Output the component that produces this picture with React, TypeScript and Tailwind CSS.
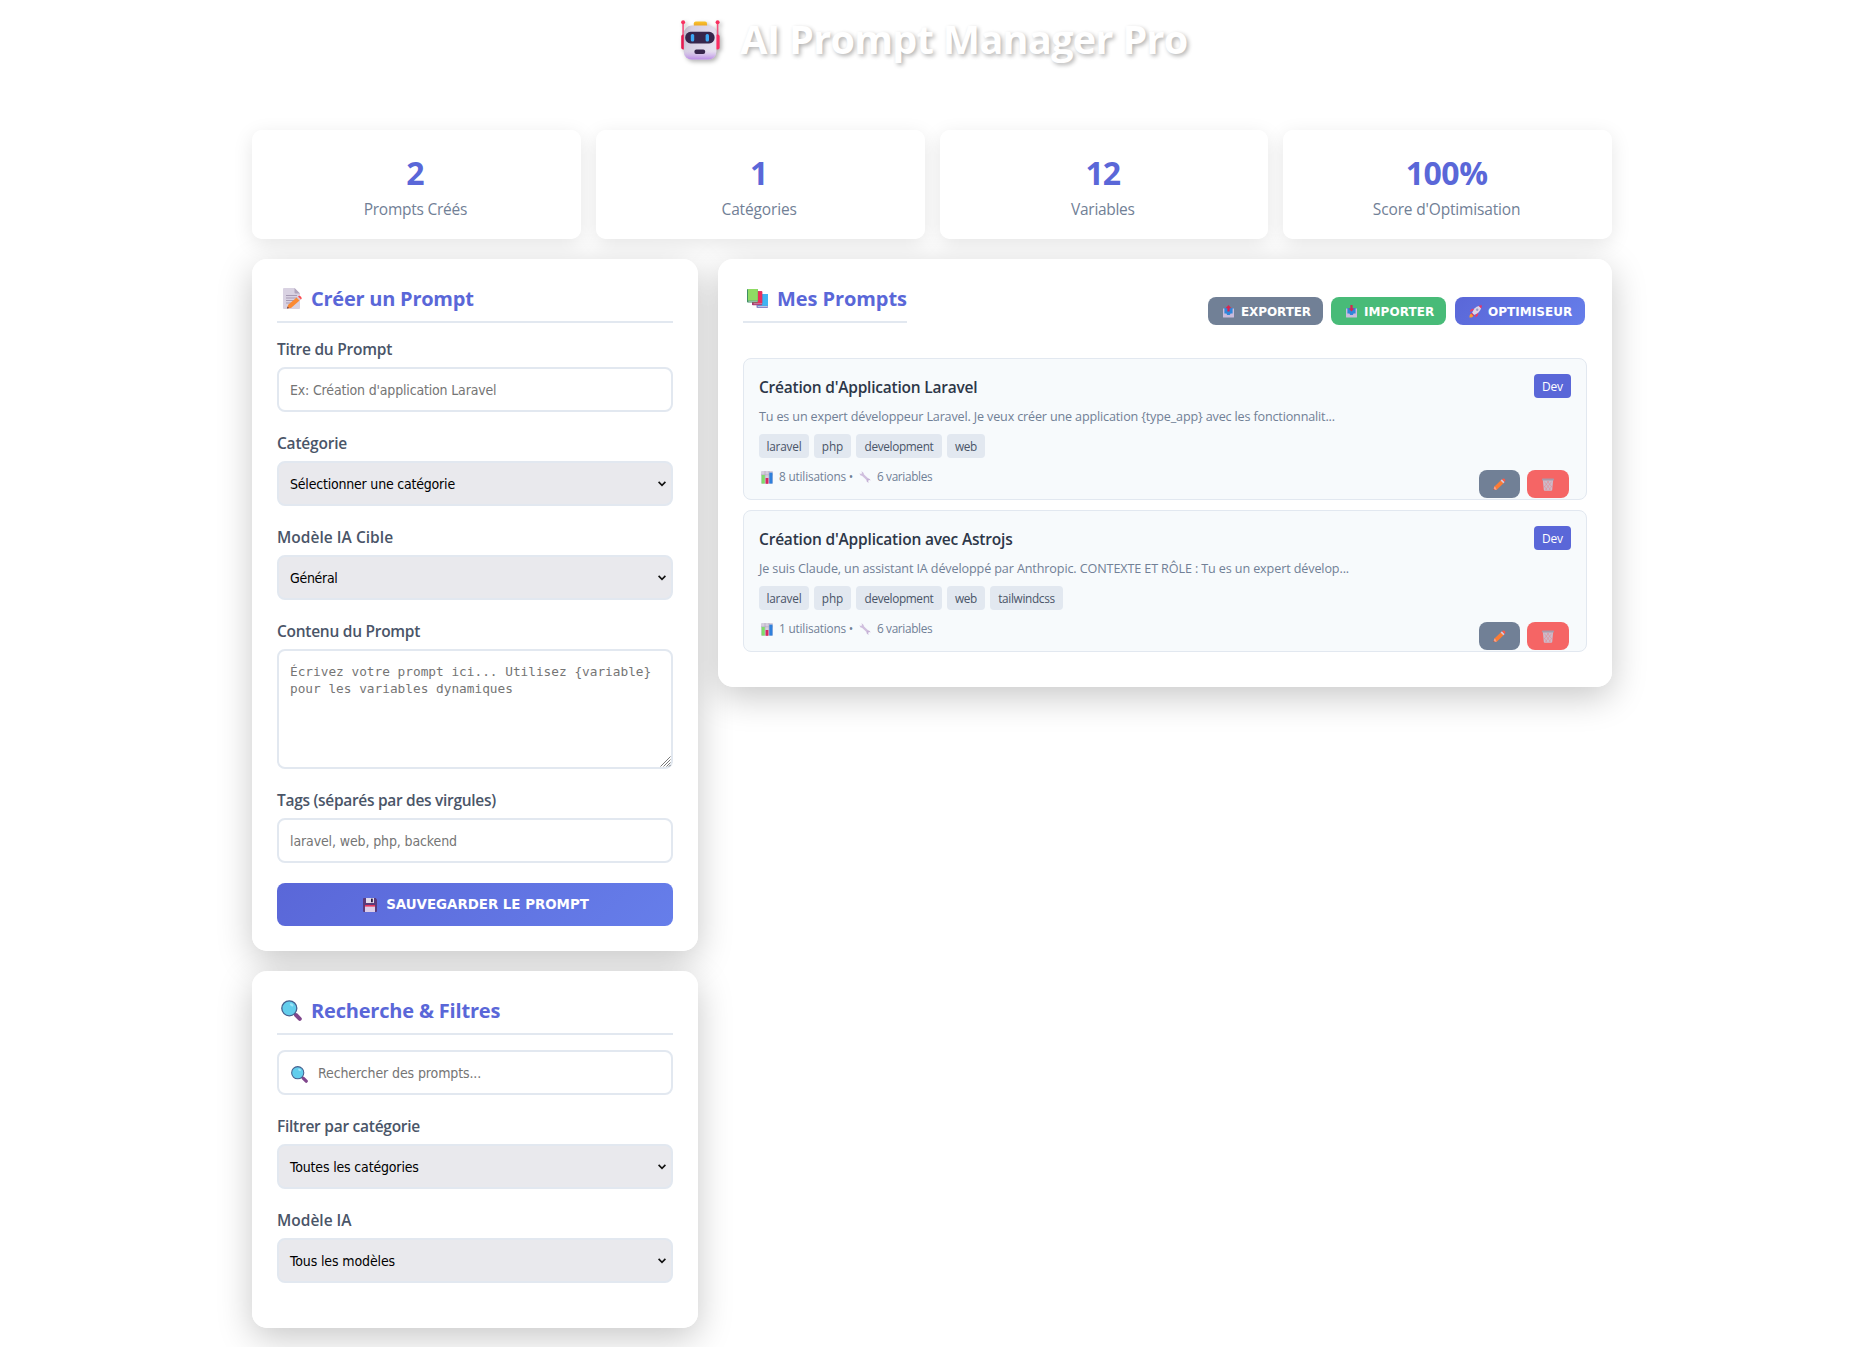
import React from "react";

type IconProps = { className?: string };

function RobotIcon({ className = "" }: IconProps) {
  return (
    <svg viewBox="0 0 40 40" className={className}>
      <defs>
        <linearGradient id="rb-face" x1="0" y1="0" x2="1" y2="0.3">
          <stop offset="0" stopColor="#b9b2c0" />
          <stop offset="0.25" stopColor="#d6cfe2" />
          <stop offset="1" stopColor="#e6dff0" />
        </linearGradient>
        <linearGradient id="rb-shade" x1="0" y1="0" x2="0" y2="1">
          <stop offset="0.75" stopColor="#c9a4ea" stopOpacity="0" />
          <stop offset="1" stopColor="#b98ae6" />
        </linearGradient>
        <linearGradient id="rb-top" x1="0" y1="0" x2="0" y2="1">
          <stop offset="0" stopColor="#fbc52a" />
          <stop offset="1" stopColor="#e69a25" />
        </linearGradient>
      </defs>
      <rect x="1.3" y="3" width="1.6" height="15" fill="#f2507f" />
      <rect x="35.8" y="3" width="1.6" height="15" fill="#f2507f" />
      <circle cx="2.1" cy="2.2" r="2" fill="#f8315f" />
      <circle cx="36.6" cy="2.2" r="2" fill="#f8315f" />
      <rect x="0.2" y="14.6" width="5" height="15" rx="2" fill="#e6194f" />
      <rect x="34" y="14.6" width="4.6" height="15" rx="2" fill="#fb2c62" />
      <rect x="12.8" y="1.4" width="13.2" height="6" rx="2" fill="url(#rb-top)" />
      <rect x="2.8" y="5.6" width="32.6" height="34" rx="8" fill="url(#rb-face)" />
      <rect x="2.8" y="5.6" width="32.6" height="34" rx="8" fill="url(#rb-shade)" />
      <rect x="4.2" y="11.8" width="29.4" height="11.6" rx="5.4" fill="#37264c" />
      <rect x="9.8" y="14" width="3.4" height="7.6" rx="1.5" fill="#3da8f5" />
      <rect x="24.6" y="14" width="3.4" height="7.6" rx="1.5" fill="#3da8f5" />
      <rect x="13.4" y="29.6" width="10.8" height="4.4" rx="2" fill="#37264c" />
    </svg>
  );
}

function MemoIcon({ className = "" }: IconProps) {
  return (
    <svg viewBox="0 0 20 21" className={className}>
      <path d="M0 1 Q0 0 1 0 H11.5 L17 5.5 V20 Q17 21 16 21 H1 Q0 21 0 20 Z" fill="#d9d2e2" />
      <path d="M11.5 0 L17 5.5 H12.5 Q11.5 5.5 11.5 4.5 Z" fill="#b0a5bd" />
      <path d="M3 7.5 H14 M3 10 H14 M3 12.5 H11 M3 15 H8" stroke="#a79bb5" strokeWidth="1" />
      <path d="M4 20.4 L5.2 16.8 L13.6 9.6 L16.6 12.6 L8 20 Z" fill="#fb8a34" />
      <path d="M13.6 9.6 L15 8.4 L18 11.4 L16.6 12.6 Z" fill="#d9c7d4" />
      <path d="M15 8.4 Q16.5 7.2 18 8.7 Q19.6 10.3 18 11.4 Z" fill="#fb4a4f" />
      <path d="M4 20.4 L4.6 18.6 L6 20 Z" fill="#5a3a4a" />
    </svg>
  );
}

function BooksIcon({ className = "" }: IconProps) {
  return (
    <svg viewBox="0 0 21 19" className={className}>
      <rect x="9.5" y="5" width="11.5" height="14" rx="0.8" fill="#8c86c8" />
      <rect x="10.4" y="5" width="10.6" height="11.8" fill="#3fb4f2" />
      <rect x="5" y="2.3" width="10.2" height="14" rx="0.8" fill="#a7356d" />
      <rect x="6" y="2.3" width="9.2" height="11.8" fill="#ea2f5b" />
      <rect x="0" y="0" width="10.8" height="13.6" rx="0.8" fill="#3f8f63" />
      <rect x="1" y="0" width="9.8" height="11.6" fill="#8fdb63" />
      <rect x="1.4" y="11.8" width="9.2" height="0.9" fill="#b5cfc6" />
      <rect x="6.6" y="14.3" width="8.4" height="0.9" fill="#d58fb0" />
      <rect x="11" y="17" width="9.6" height="0.9" fill="#c3cbe8" />
    </svg>
  );
}

function LensIcon({ className = "" }: IconProps) {
  return (
    <svg viewBox="0 0 21 21" className={className}>
      <path d="M13 13 L15.4 15.4" stroke="#8a8a9c" strokeWidth="2" />
      <path d="M15 15 L18.8 18.8" stroke="#80468c" strokeWidth="4" strokeLinecap="round" />
      <circle cx="8.3" cy="8.3" r="7.5" fill="#62cdec" stroke="#44608f" strokeWidth="1.3" />
      <ellipse cx="10.6" cy="4.8" rx="2" ry="1.3" transform="rotate(35 10.6 4.8)" fill="#9be4f7" />
    </svg>
  );
}

function FloppyIcon({ className = "" }: IconProps) {
  return (
    <svg viewBox="0 0 14 14" className={className}>
      <path d="M0 1 Q0 0 1 0 H12.6 L14 1.4 V13 Q14 14 13 14 H1 Q0 14 0 13 Z" fill="#5b3a7a" />
      <rect x="3" y="0" width="8" height="5" fill="#e2dcec" />
      <rect x="8" y="0.6" width="1.8" height="3.6" fill="#2d1c42" />
      <rect x="2" y="7" width="10" height="7" fill="#dccde8" />
      <rect x="2" y="7" width="10" height="1.6" fill="#e8365c" />
    </svg>
  );
}

function TrayIcon({ up, className = "" }: IconProps & { up: boolean }) {
  return (
    <svg viewBox="0 0 11 13" className={className}>
      <rect x="0.6" y="3" width="9.8" height="7" fill="#2f86da" />
      <path d="M0 3.4 H1.4 V8.6 H3.4 L4.2 10 H6.8 L7.6 8.6 H9.6 V3.4 H11 V12 Q11 12.6 10.4 12.6 H0.6 Q0 12.6 0 12 Z" fill="#c9bbdc" />
      {up ? (
        <path d="M5.5 0 L8.4 3.2 H6.6 V6.6 H4.4 V3.2 H2.6 Z" fill="#d92450" />
      ) : (
        <path d="M5.5 6.6 L8.4 3.6 H6.6 V0 H4.4 V3.6 H2.6 Z" fill="#d92450" />
      )}
    </svg>
  );
}

function RocketIcon({ className = "" }: IconProps) {
  return (
    <svg viewBox="0 0 13 13" className={className}>
      <path d="M3.6 6 L1 6.8 Q0.4 7 1.6 5 Q2.6 3.4 5.2 3.8 Z" fill="#ef3a63" />
      <path d="M7 9.4 L6.2 12 Q6 12.6 8 11.4 Q9.6 10.4 9.2 7.8 Z" fill="#ef3a63" />
      <path d="M0.4 12.6 Q0.4 9 2.6 8.6 L4.4 10.4 Q4 12.6 0.4 12.6 Z" fill="#fb9a33" />
      <path d="M3 8 Q5 2 10 0.9 L12.1 3 Q11 8 5 10 Z" fill="#ddd3e6" />
      <path d="M9.6 0.8 Q11.6 0 12.8 0.2 Q13 1.4 12.2 3.4 Z" fill="#f0325f" />
      <circle cx="8.2" cy="4.8" r="1.2" fill="#8f9fca" />
      <path d="M2.6 7.6 L5.4 10.4 L4.4 10.9 L2.1 8.6 Z" fill="#e5315d" />
    </svg>
  );
}

function ChartIcon({ className = "" }: IconProps) {
  return (
    <svg viewBox="0 0 12 13" className={className}>
      <rect width="12" height="12.8" rx="1" fill="#d5cedd" />
      <path d="M0 3.8 H12 M4 0 V12 M8 0 V12" stroke="#aea3ba" strokeWidth="0.6" />
      <rect x="0.6" y="4" width="3.2" height="8.6" fill="#7fdc6a" />
      <rect x="4.6" y="7" width="2.8" height="5.8" fill="#d8265f" />
      <rect x="8.3" y="1.6" width="3.2" height="11" fill="#2f80dc" />
    </svg>
  );
}

function WrenchIcon({ className = "" }: IconProps) {
  return (
    <svg viewBox="0 0 12 12" className={className}>
      <path d="M3 3.2 L9 8.8" stroke="#d0bfde" strokeWidth="2.3" />
      <path d="M0.5 2.2 Q0.7 4.8 3.2 4.7 Q5.2 4.2 4.7 2.2 Q4 0.4 2.2 0.5 L3.2 2 L2 3.1 Z" fill="#d0bfde" />
      <path d="M11.6 9.6 Q11.2 7.3 9 7.4 Q7 8 7.6 10.2 Q8.3 11.5 9.9 11.4 L9 9.9 L10.1 8.9 Z" fill="#c6b2d6" />
    </svg>
  );
}

function PencilIcon({ className = "" }: IconProps) {
  return (
    <svg viewBox="0 0 13 13" className={className}>
      <path d="M0.4 12 L1.4 8.6 L8 2.2 L10.8 5 L4 11.4 Z" fill="#fb7c36" />
      <path d="M7.6 2.6 L9 1.3 L11.6 3.9 L10.3 5.3 Z" fill="#dcc8da" />
      <path d="M9 1.3 Q10.3 0 11.9 1 Q13 2.6 11.6 3.9 Z" fill="#fb5a48" />
      <path d="M0.4 12 L1.4 8.6 L2.6 9.3 L3 10.6 L4 11.4 Z" fill="#f6a08a" />
      <path d="M0.4 12 L0.8 10.8 L1.7 11.6 Z" fill="#553444" />
    </svg>
  );
}

function TrashIcon({ className = "" }: IconProps) {
  return (
    <svg viewBox="0 0 12 13" className={className}>
      <path d="M0.8 1.6 H11.2 L10.2 12 Q10 12.8 9.4 12.8 H2.6 Q2 12.8 1.8 12 Z" fill="#cbbccb" />
      <path d="M2.4 3.6 L8.6 12 M5.2 3 L9.8 9 M2.4 8.4 L5 12 M9.6 3.6 L3.4 12 M6.8 3 L2.2 9 M9.6 8.4 L7 12" stroke="#e48b94" strokeWidth="0.6" />
      <rect x="0" y="0.6" width="12" height="2" rx="0.8" fill="#a99aaa" />
    </svg>
  );
}

const TAHOMA = "font-['DejaVu_Sans_Condensed','DejaVu_Sans',sans-serif]";
const VERDANA = "font-['DejaVu_Sans',sans-serif]";
const SHADOW_LAYER = "relative before:absolute before:inset-0 before:-z-10 before:content-['']";
const PANEL = `${SHADOW_LAYER} rounded-[15px] bg-white/95 p-[25px] before:rounded-[15px] before:shadow-[0_10px_35px_rgba(0,0,0,0.22)]`;
const FIELD = `flex w-full items-center rounded-[8px] border-2 border-[#e2e8f0] px-[11px] text-[14px] ${TAHOMA}`;

function Stat({ value, label, valueTrack, labelTrack }: { value: string; label: string; valueTrack: string; labelTrack: string }) {
  return (
    <div className={`${SHADOW_LAYER} flex h-[109px] flex-1 flex-col items-center rounded-[10px] bg-white/95 pt-[21px] pr-[2px] before:rounded-[10px] before:shadow-[0_5px_20px_rgba(0,0,0,0.1)]`}>
      <div className={`text-[32px] leading-[43px] font-bold text-[#5a67d8] ${valueTrack}`}>{value}</div>
      <div className={`mt-[4px] text-[15.5px] leading-[22px] text-[#718096] ${labelTrack}`}>{label}</div>
    </div>
  );
}

function Heading({ icon, text, track }: { icon: React.ReactNode; text: string; track: string }) {
  return (
    <h2 className="mb-[15px] flex h-[39px] items-start border-b-2 border-[#e2e8f0] text-[20px] leading-[29px] font-bold text-[#5a67d8]">
      <span className="flex h-[29px] w-[34px] shrink-0 items-center pl-[4px]">{icon}</span>
      <span className={`whitespace-nowrap ${track}`}>{text}</span>
    </h2>
  );
}

function Label({ text, track }: { text: string; track: string }) {
  return <div className={`mb-[5px] h-[24px] text-[15.5px] leading-[22px] font-semibold text-[#4a5568] ${track}`}>{text}</div>;
}

function SelectBox({ text, track }: { text: string; track: string }) {
  return (
    <div className={`${FIELD} mb-[20px] h-[45px] justify-between bg-[#e9e9ed] pr-[5px] text-black`}>
      <span className={`pt-[2px] ${track}`}>{text}</span>
      <svg viewBox="0 0 8 6" className="h-[6px] w-[8px]">
        <path d="M0.6 0.9 L4 4.4 L7.4 0.9" fill="none" stroke="#111" strokeWidth="1.6" />
      </svg>
    </div>
  );
}

function TextBox({ text, track, icon }: { text: string; track: string; icon?: React.ReactNode }) {
  return (
    <div className={`${FIELD} mb-[20px] h-[45px] bg-white text-[#757575]`}>
      {icon}
      <span className={`pt-[2px] ${track}`}>{text}</span>
    </div>
  );
}

const TOOL = `flex h-[28px] items-center rounded-[8px] text-[12px] font-bold text-white ${VERDANA}`;

type Tag = { name: string; box: string };
const baseTags: Tag[] = [
  { name: "laravel", box: "w-[50px] tracking-[-0.2px]" },
  { name: "php", box: "w-[37px] tracking-[-0.1px]" },
  { name: "development", box: "w-[86px] tracking-[-0.35px]" },
  { name: "web", box: "w-[38px] tracking-[-0.3px]" },
];

function PromptItem({ title, titleTrack, body, bodyTrack, tags, uses }: { title: string; titleTrack: string; body: string; bodyTrack: string; tags: Tag[]; uses: string }) {
  return (
    <div className="relative mb-[10px] h-[142px] rounded-[8px] border border-[#e2e8f0] bg-[#f7fafc] p-[15px]">
      <div className="flex h-[28px] items-start justify-between">
        <div className={`text-[15.5px] leading-[27px] font-semibold text-[#2d3748] ${titleTrack}`}>{title}</div>
        <span className="flex h-[24px] w-[37px] items-center justify-center rounded-[4px] bg-[#5a67d8] pt-[2px] text-[12px] tracking-[-0.2px] text-white">Dev</span>
      </div>
      <p className={`h-[32px] text-[12.6px] leading-[29px] whitespace-nowrap text-[#718096] ${bodyTrack}`}>{body}</p>
      <div className="flex gap-[5px]">
        {tags.map((t) => (
          <span key={t.name} className={`flex h-[24px] items-center justify-center rounded-[4px] bg-[#e2e8f0] pt-[2px] text-[11.8px] text-[#4a5568] ${t.box}`}>
            {t.name}
          </span>
        ))}
      </div>
      <div className="mt-[8px] flex h-[22px] items-center text-[11.8px] text-[#718096]">
        <ChartIcon className="mr-[6px] ml-[2px] h-[13px] w-[12px]" />
        <span className="w-[80px] tracking-[-0.18px] whitespace-nowrap">{uses} utilisations •</span>
        <WrenchIcon className="mr-[6px] h-[12px] w-[12px]" />
        <span className="tracking-[-0.35px] whitespace-nowrap">6 variables</span>
      </div>
      <div className="absolute right-[17px] bottom-[1px] flex gap-[7px]">
        <button className="flex h-[28px] w-[41px] items-center justify-center rounded-[8px] bg-[#718096]">
          <PencilIcon className="h-[13px] w-[13px]" />
        </button>
        <button className="flex h-[28px] w-[42px] items-center justify-center rounded-[8px] bg-[#f56565]">
          <TrashIcon className="h-[13px] w-[12px]" />
        </button>
      </div>
    </div>
  );
}

export default function App() {
  return (
    <div className="relative isolate h-[1347px] overflow-hidden bg-white pl-[252px] font-['Open_Sans','Noto_Sans',sans-serif]">
      <div className="w-[1360px]">
        <header className="flex h-[130px] justify-center pt-[12px] pl-[5px]">
          <RobotIcon className="mt-[8px] mr-[19px] h-[40px] w-[40px] drop-shadow-[2px_2px_2px_rgba(0,0,0,0.3)]" />
          <h1 className="text-[39.5px] leading-[54px] font-bold tracking-[-0.65px] text-white [text-shadow:2px_2px_4px_rgba(0,0,0,0.3)]">AI Prompt Manager Pro</h1>
        </header>

        <div className="mb-[20px] flex gap-[15px]">
          <Stat value="2" label="Prompts Créés" valueTrack="" labelTrack="tracking-[-0.25px]" />
          <Stat value="1" label="Catégories" valueTrack="" labelTrack="tracking-[-0.15px]" />
          <Stat value="12" label="Variables" valueTrack="tracking-[-0.8px]" labelTrack="tracking-[-0.3px]" />
          <Stat value="100%" label="Score d'Optimisation" valueTrack="tracking-[-0.5px]" labelTrack="tracking-[-0.16px]" />
        </div>

        <div className="flex items-start gap-[20px]">
          <div className="flex w-[446px] shrink-0 flex-col gap-[20px]">
            <section className={PANEL}>
              <Heading icon={<MemoIcon className="ml-[2px] h-[21px] w-[20px]" />} text="Créer un Prompt" track="tracking-[-0.24px]" />
              <Label text="Titre du Prompt" track="tracking-[-0.24px]" />
              <TextBox text="Ex: Création d'application Laravel" track="tracking-[-0.17px]" />
              <Label text="Catégorie" track="tracking-[-0.21px]" />
              <SelectBox text="Sélectionner une catégorie" track="tracking-[-0.2px]" />
              <Label text="Modèle IA Cible" track="tracking-[0.03px]" />
              <SelectBox text="Général" track="tracking-[-0.3px]" />
              <Label text="Contenu du Prompt" track="tracking-[-0.27px]" />
              <div className="relative mb-[20px] h-[120px] rounded-[8px] border-2 border-[#e2e8f0] bg-white px-[11px] py-[12px] font-['DejaVu_Sans_Mono',monospace] text-[12.77px] leading-[17px] text-[#757575]">
                Écrivez votre prompt ici... Utilisez {"{variable}"} pour les variables dynamiques
                <svg viewBox="0 0 11 11" className="absolute right-0 bottom-0 h-[11px] w-[11px]">
                  <path d="M0.5 10.5 L10.5 0.5 M3.5 10.5 L10.5 3.5 M6.5 10.5 L10.5 6.5 M9 10.5 L10.5 9" stroke="#6b6b6b" strokeWidth="0.9" />
                </svg>
              </div>
              <Label text="Tags (séparés par des virgules)" track="tracking-[-0.3px]" />
              <TextBox text="laravel, web, php, backend" track="tracking-[-0.12px]" />
              <button className={`flex h-[43px] w-full items-center justify-center rounded-[8px] bg-[linear-gradient(135deg,#5a67d8,#667eea)] pl-[2px] text-[13.4px] font-bold text-white ${VERDANA}`}>
                <FloppyIcon className="mt-[1px] mr-[9px] h-[14px] w-[14px]" />
                <span className="pt-[2px] tracking-[-0.02px]">SAUVEGARDER LE PROMPT</span>
              </button>
            </section>

            <section className={`${PANEL} h-[357px]`}>
              <Heading icon={<LensIcon className="h-[21px] w-[21px]" />} text="Recherche & Filtres" track="tracking-[-0.18px]" />
              <TextBox text="Rechercher des prompts..." track="tracking-[-0.11px]" icon={<LensIcon className="mt-[4px] mr-[10px] ml-[1px] h-[17px] w-[17px]" />} />
              <Label text="Filtrer par catégorie" track="tracking-[-0.26px]" />
              <SelectBox text="Toutes les catégories" track="tracking-[-0.16px]" />
              <Label text="Modèle IA" track="tracking-[0px]" />
              <SelectBox text="Tous les modèles" track="tracking-[-0.12px]" />
            </section>
          </div>

          <section className={`${PANEL} h-[428px] flex-1`}>
            <div className="flex h-[74px] items-start justify-between pr-[2px]">
              <Heading icon={<BooksIcon className="h-[19px] w-[21px]" />} text="Mes Prompts" track="tracking-[-0.08px]" />
              <div className="mt-[13px] flex">
                <button className={`${TOOL} w-[115px] bg-[#718096] pl-[15px] tracking-[-0.1px]`}>
                  <TrayIcon up className="mt-[1px] mr-[7px] h-[13px] w-[11px]" />
                  <span className="pt-[1px]">EXPORTER</span>
                </button>
                <button className={`${TOOL} ml-[8px] w-[115px] bg-[#48bb78] pl-[15px] tracking-[0.07px]`}>
                  <TrayIcon up={false} className="mr-[7px] h-[13px] w-[11px]" />
                  <span className="pt-[1px]">IMPORTER</span>
                </button>
                <button className={`${TOOL} ml-[9px] w-[130px] bg-[linear-gradient(135deg,#5a67d8,#667eea)] pl-[14px] tracking-[0.04px]`}>
                  <RocketIcon className="mt-[1px] mr-[6px] h-[13px] w-[13px]" />
                  <span className="pt-[1px]">OPTIMISEUR</span>
                </button>
              </div>
            </div>
            <PromptItem
              title="Création d'Application Laravel"
              titleTrack="tracking-[-0.22px]"
              body="Tu es un expert développeur Laravel. Je veux créer une application {type_app} avec les fonctionnalit..."
              bodyTrack="tracking-[-0.16px]"
              tags={baseTags}
              uses="8"
            />
            <PromptItem
              title="Création d'Application avec Astrojs"
              titleTrack="tracking-[-0.19px]"
              body="Je suis Claude, un assistant IA développé par Anthropic. CONTEXTE ET RÔLE : Tu es un expert dévelop..."
              bodyTrack="tracking-[-0.12px]"
              tags={[...baseTags, { name: "tailwindcss", box: "w-[73px] tracking-[-0.33px]" }]}
              uses="1"
            />
          </section>
        </div>
      </div>
    </div>
  );
}
